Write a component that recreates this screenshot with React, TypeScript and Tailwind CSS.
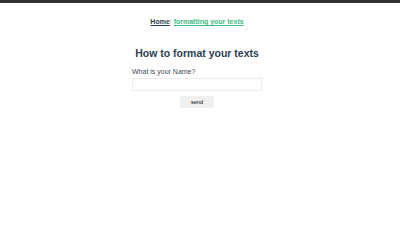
export default function App() {
  return (
    <div className="min-h-[243px] bg-white pr-[6px]" style={{ fontFamily: '"Liberation Sans", Arial, sans-serif' }}>
      <div className="-mr-[6px] h-[3px] bg-[#333333]" />
      <nav className="flex justify-center pt-[14px] text-[7px] font-bold leading-[9px] text-[#2c3e50]">
        <span className="underline">Home</span>
        <span className="font-normal text-[#ccc]">|</span>
        <span className="ml-[2px] text-[#42b983] underline">formatting your texts</span>
      </nav>
      <div className="mt-[21px] flex justify-center">
        <div className="flex w-[130px] flex-col text-[#2c3e50]">
          <h1 className="-mx-[10px] text-center text-[10.5px] font-bold leading-[13px]">How to format your texts</h1>
          <label className="mt-[7px] text-[7px] leading-[9px] text-[#3d4b59]">What is your Name?</label>
          <input className="mt-[2px] h-[13px] w-[130px] border border-[#ececec] bg-white" />
          <div className="mt-[5px] flex justify-center">
            <button className="h-[12px] w-[34px] bg-[#efefef] text-[5.5px] leading-[12px] text-black">send</button>
          </div>
        </div>
      </div>
    </div>
  );
}
